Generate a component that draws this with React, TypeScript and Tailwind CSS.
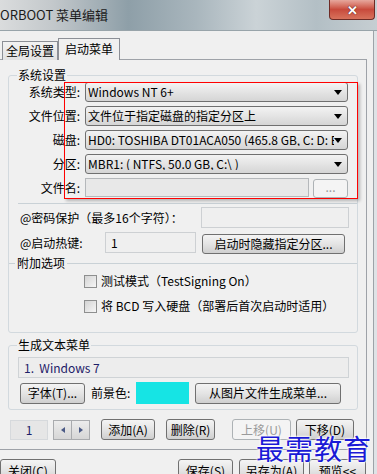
import type { ReactNode } from "react";

const btnNormal =
  "border-[#707070] bg-linear-to-b from-[#f4f4f4] via-[#e4e4e4] to-[#cfcfcf] text-black";
const btnDisabled = "border-[#adb2b5] bg-[#f4f4f4] text-[#9a9a9a]";

function Btn({ children, className = "", disabled = false }: { children: ReactNode; className?: string; disabled?: boolean }) {
  return (
    <div
      className={`flex shrink-0 items-center justify-center rounded-[3px] border leading-none whitespace-nowrap ${disabled ? btnDisabled : btnNormal} ${className}`}
    >
      {children}
    </div>
  );
}

function Arrow() {
  return <div className="h-0 w-0 shrink-0 border-x-[4px] border-t-[5px] border-x-transparent border-t-black" />;
}

function Combo({ text }: { text: string }) {
  return (
    <div className="flex h-[20px] w-[263px] items-center rounded-[3px] border border-[#707070] bg-linear-to-b from-[#f3f3f3] to-[#d5d5d5] pl-[2px] pr-[5px]">
      <span className="flex-1 overflow-hidden whitespace-nowrap leading-none">{text}</span>
      <Arrow />
    </div>
  );
}

function Row({ label, children }: { label: string; children: ReactNode }) {
  return (
    <div className="flex h-[20px] items-center">
      <span className="w-[71px] text-right leading-none">{label}</span>
      <div className="ml-[5px] flex">{children}</div>
    </div>
  );
}

function Check({ label }: { label: ReactNode }) {
  return (
    <div className="flex h-[20px] items-center pl-[75px]">
      <div className="h-[13px] w-[13px] border border-[#8e8f8f] bg-linear-to-br from-[#d4d4d4] to-[#f6f6f6]" />
      <span className="ml-[4px] leading-none">{label}</span>
    </div>
  );
}

export default function App() {
  return (
    <div className="relative h-[474px] w-[377px] overflow-hidden bg-[#f0f0f0] font-['Noto_Sans_CJK_SC',sans-serif] text-[12px] text-black">
      {/* title bar */}
      <div className="flex h-[31px] items-start border-b border-[#98a4aa] bg-[linear-gradient(90deg,#dadcdd_0%,#c3c8cb_14%,#8e9fa8_34%,#a9b6bd_52%,#cbd3d7_68%,#b3bfc5_84%,#c6ced2_100%)]">
        <span className="mt-[7px] text-[13px] leading-[16px] text-[#1b1b1b]">ORBOOT 菜单编辑</span>
        <div className="ml-auto mr-[2px] flex h-[20px] w-[46px] items-center justify-center rounded-b-[4px] border border-t-0 border-[#6e2b25] bg-linear-to-b from-[#e6a79d] via-[#c84a3c] to-[#d7725c]">
          <span className="text-[13px] font-bold leading-none text-white [text-shadow:0_0_1px_#5a1d18,0_0_1px_#5a1d18]">✕</span>
        </div>
      </div>

      <div className="flex">
        <div className="w-[367px]">
          {/* tabs */}
          <div className="mt-[7px] flex h-[22px] items-end pl-[2px]">
            <div className="flex h-[19px] w-[56px] items-center justify-center border border-b-0 border-[#8c8f96] bg-linear-to-b from-[#f2f2f2] to-[#e2e2e2] text-[12px] leading-none">
              全局设置
            </div>
            <div className="relative z-10 flex h-[22px] w-[62px] items-center justify-center border border-b-0 border-[#8c8f96] bg-[#f0f0f0] pb-[2px] text-[12px] leading-none">
              启动菜单
            </div>
          </div>

          {/* panel */}
          <div className="-mt-px border-y border-r border-[#9ea2a8] pb-[9px]">
            <fieldset className="mx-[8px] mt-[8px] rounded-[3px] border border-[#d2d9de] pb-[16px]">
              <legend className="ml-[8px] px-[1px] leading-[14px]">系统设置</legend>
              <div className="flex flex-col gap-[4px]">
                <Row label="系统类型:">
                  <Combo text="Windows NT 6+" />
                </Row>
                <Row label="文件位置:">
                  <Combo text="文件位于指定磁盘的指定分区上" />
                </Row>
                <Row label="磁盘:">
                  <Combo text="HD0: TOSHIBA DT01ACA050 (465.8 GB, C: D: E: F" />
                </Row>
                <Row label="分区:">
                  <Combo text="MBR1: ( NTFS,  50.0 GB, C:\ )" />
                </Row>
                <Row label="文件名:">
                  <div className="h-[19px] w-[224px] border border-[#b5b8bb] bg-[#e8e8e8]" />
                  <Btn disabled className="ml-[4px] mt-px h-[19px] w-[35px] pb-[4px]">
                    ...
                  </Btn>
                </Row>
              </div>
              <div className="ml-[9px] mt-[5px] h-px bg-[#c9d1d6]" />

              <div className="mt-[3px] flex h-[21px] items-center pl-[11px] pr-[8px]">
                <span className="flex-1 leading-none">@密码保护（最多16个字符）：</span>
                <div className="h-[21px] w-[148px] border border-[#cdd0d3] bg-[#efefef]" />
              </div>
              <div className="mt-[4px] flex h-[21px] items-center pl-[11px]">
                <span className="w-[85px] leading-none">@启动热键:</span>
                <div className="flex h-[21px] w-[91px] items-center border border-[#cdd0d3] bg-[#efefef] pl-[5px] leading-none">1</div>
                <Btn className="ml-[6px] mt-[2px] h-[20px] w-[143px]">启动时隐藏指定分区...</Btn>
              </div>

              <div className="mt-[3px] flex h-[14px] items-center">
                <div className="h-px w-[6px] bg-[#c9d1d6]" />
                <span className="px-[2px] leading-[14px]">附加选项</span>
                <div className="h-px flex-1 bg-[#c9d1d6]" />
              </div>
              <div className="mt-px">
                <Check label="测试模式（TestSigning On）" />
              </div>
              <div className="mt-[5px]">
                <Check label="将 BCD 写入硬盘（部署后首次启动时适用）" />
              </div>
            </fieldset>

            <fieldset className="mx-[8px] mt-[5px] rounded-[3px] border border-[#d2d9de] pb-[5px]">
              <legend className="ml-[8px] px-[1px] leading-[14px]">生成文本菜单</legend>
              <div className="ml-[9px] mr-[8px] mt-[5px] flex h-[21px] items-center border border-[#cfd3d6] bg-[#ededed] pl-[5px] leading-none text-[#1d2068]">
                1.&nbsp;&nbsp;Windows 7
              </div>
              <div className="mt-[4px] flex h-[22px] items-center pl-[11px]">
                <Btn className="h-[21px] w-[65px]">字体(T)...</Btn>
                <span className="ml-[6px] w-[45px] leading-none">前景色:</span>
                <div className="h-[22px] w-[53px] bg-[#16e4e4]" />
                <Btn className="ml-[6px] h-[21px] w-[146px]">从图片文件生成菜单...</Btn>
              </div>
            </fieldset>

            <div className="mt-[9px] flex h-[21px] items-center pl-[10px]">
              <div className="flex h-[20px] w-[38px] items-center justify-center border border-[#d6d9dc] bg-[#e6e6e6] leading-none text-[#1d2068]">
                1
              </div>
              <div className="ml-[5px] flex h-[20px] w-[19px] items-center justify-center border border-[#a9abae] bg-linear-to-b from-[#ececec] to-[#d6d6d6]">
                <div className="h-0 w-0 border-y-[3px] border-r-[4px] border-y-transparent border-r-[#4b5a86]" />
              </div>
              <div className="flex h-[20px] w-[18px] items-center justify-center border border-l-0 border-[#a9abae] bg-linear-to-b from-[#ececec] to-[#d6d6d6]">
                <div className="h-0 w-0 border-y-[3px] border-l-[4px] border-y-transparent border-l-[#4b5a86]" />
              </div>
              <Btn className="ml-[11px] h-[21px] w-[54px]">添加(A)</Btn>
              <Btn className="ml-[11px] h-[21px] w-[49px]">删除(R)</Btn>
              <Btn disabled className="ml-[17px] h-[21px] w-[59px]">上移(U)</Btn>
              <Btn className="ml-[5px] h-[21px] w-[58px]">下移(D)</Btn>
            </div>
          </div>

          {/* bottom buttons */}
          <div className="mt-[9px] flex h-[23px] items-center">
            <Btn className="h-[23px] w-[56px]">关闭(C)</Btn>
            <Btn className="ml-[122px] h-[23px] w-[55px]">保存(S)</Btn>
            <Btn className="ml-[6px] h-[23px] w-[65px]">另存为(A)</Btn>
            <Btn className="ml-[5px] h-[23px] w-[57px]">预览&lt;&lt;</Btn>
          </div>
        </div>

        {/* right window frame */}
        <div className="flex w-[10px] self-stretch">
          <div className="w-[6px]" />
          <div className="w-px bg-[#9da3a8]" />
          <div className="w-[3px] bg-[#dfe3e6]" />
        </div>
      </div>

      {/* red highlight rectangle */}
      <div className="pointer-events-none absolute left-[64px] top-[82px] h-[117px] w-[294px] border border-[#ff0000] shadow-[2px_2px_3px_rgba(0,0,0,0.25)]" />

      {/* watermark */}
      <div className="pointer-events-none absolute left-[256px] top-[428px] text-[28px] leading-[40px] tracking-[1px] text-[#1a1ad6] [text-shadow:0_0_2px_#fff,0_0_2px_#fff,0_0_3px_#fff]">
        最需教育
      </div>
    </div>
  );
}
